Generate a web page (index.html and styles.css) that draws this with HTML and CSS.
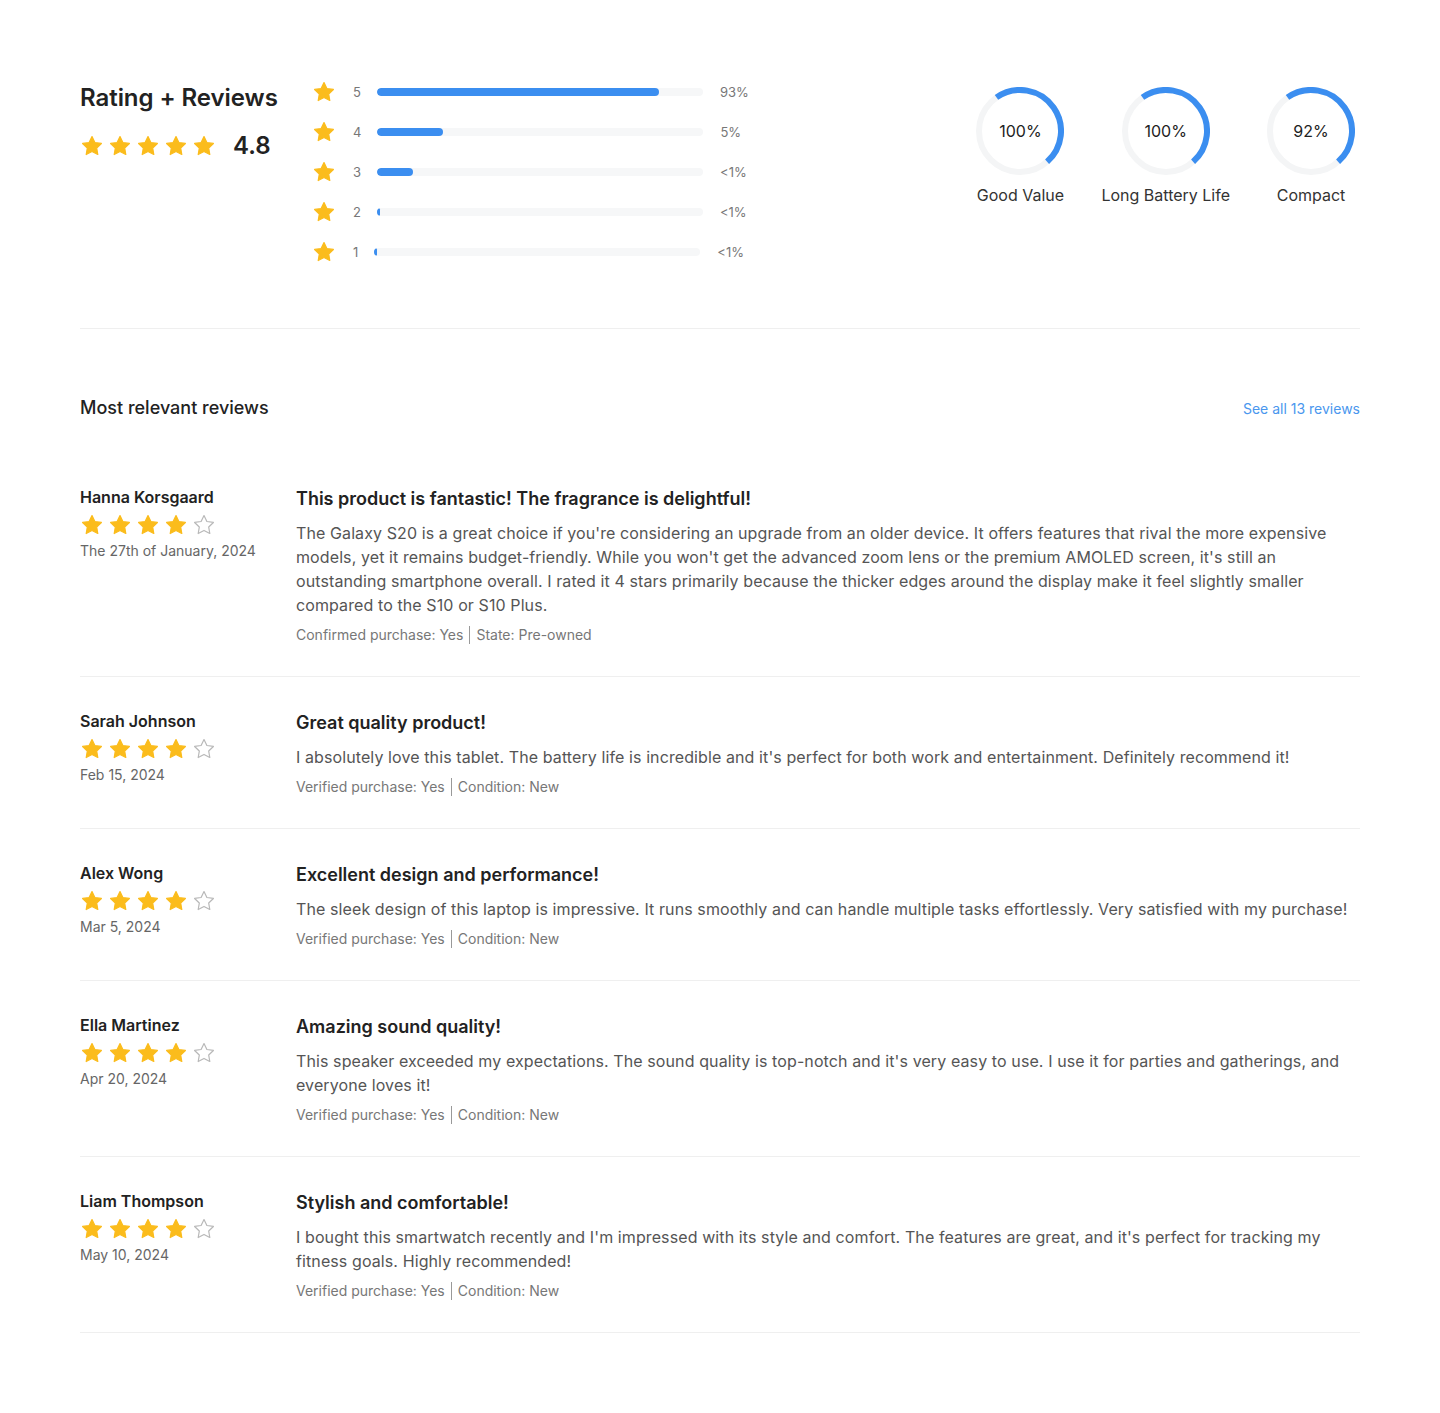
FILE: index.html
```html
<!DOCTYPE html>
<html lang="en">
<head>
<meta charset="utf-8">
<title>Rating + Reviews</title>
<link rel="stylesheet" href="styles.css">
</head>
<body>
<svg width="0" height="0" class="defs" aria-hidden="true">
  <defs>
    <path id="star" d="M12 2.6l2.9 5.9 6.5.95-4.7 4.6 1.1 6.45L12 17.45l-5.8 3.05 1.1-6.45-4.7-4.6 6.5-.95z"/>
  </defs>
</svg>
<main class="page">
  <section class="summary">
    <div class="overall">
      <h1 class="overall-title">Rating + Reviews</h1>
      <div class="overall-score">
        <div class="stars">
          <svg viewBox="0 0 24 24" class="star full"><use href="#star"/></svg>
          <svg viewBox="0 0 24 24" class="star full"><use href="#star"/></svg>
          <svg viewBox="0 0 24 24" class="star full"><use href="#star"/></svg>
          <svg viewBox="0 0 24 24" class="star full"><use href="#star"/></svg>
          <svg viewBox="0 0 24 24" class="star full"><use href="#star"/></svg>
        </div>
        <span class="score">4.8</span>
      </div>
    </div>

    <div class="bars">
      <div class="bar-row">
        <svg viewBox="0 0 24 24" class="star full"><use href="#star"/></svg>
        <span class="bar-num">5</span>
        <div class="track"><div class="fill" style="width:86.5%"></div></div>
        <span class="bar-pct">93%</span>
      </div>
      <div class="bar-row">
        <svg viewBox="0 0 24 24" class="star full"><use href="#star"/></svg>
        <span class="bar-num">4</span>
        <div class="track"><div class="fill" style="width:20.2%"></div></div>
        <span class="bar-pct">5%</span>
      </div>
      <div class="bar-row">
        <svg viewBox="0 0 24 24" class="star full"><use href="#star"/></svg>
        <span class="bar-num">3</span>
        <div class="track"><div class="fill" style="width:11%"></div></div>
        <span class="bar-pct">&lt;1%</span>
      </div>
      <div class="bar-row">
        <svg viewBox="0 0 24 24" class="star full"><use href="#star"/></svg>
        <span class="bar-num">2</span>
        <div class="track"><div class="fill" style="width:0.8%"></div></div>
        <span class="bar-pct">&lt;1%</span>
      </div>
      <div class="bar-row">
        <svg viewBox="0 0 24 24" class="star full"><use href="#star"/></svg>
        <span class="bar-num">1</span>
        <div class="track"><div class="fill" style="width:0.8%"></div></div>
        <span class="bar-pct">&lt;1%</span>
      </div>
    </div>

    <div class="rings">
      <div class="ring-item">
        <div class="ring">
          <svg viewBox="0 0 88 88" class="ring-svg">
            <circle cx="44" cy="44" r="41" class="ring-track"/>
            <circle cx="44" cy="44" r="41" class="ring-arc"/>
          </svg>
          <span class="ring-val">100%</span>
        </div>
        <div class="ring-label">Good Value</div>
      </div>
      <div class="ring-item">
        <div class="ring">
          <svg viewBox="0 0 88 88" class="ring-svg">
            <circle cx="44" cy="44" r="41" class="ring-track"/>
            <circle cx="44" cy="44" r="41" class="ring-arc"/>
          </svg>
          <span class="ring-val">100%</span>
        </div>
        <div class="ring-label">Long Battery Life</div>
      </div>
      <div class="ring-item">
        <div class="ring">
          <svg viewBox="0 0 88 88" class="ring-svg">
            <circle cx="44" cy="44" r="41" class="ring-track"/>
            <circle cx="44" cy="44" r="41" class="ring-arc"/>
          </svg>
          <span class="ring-val">92%</span>
        </div>
        <div class="ring-label">Compact</div>
      </div>
    </div>
  </section>

  <section class="reviews">
    <div class="reviews-head">
      <h2 class="reviews-title">Most relevant reviews</h2>
      <a class="see-all" href="#">See all 13 reviews</a>
    </div>

    <article class="review">
      <div class="review-author">
        <div class="author-name">Hanna Korsgaard</div>
        <div class="stars stars-sm">
          <svg viewBox="0 0 24 24" class="star full"><use href="#star"/></svg>
          <svg viewBox="0 0 24 24" class="star full"><use href="#star"/></svg>
          <svg viewBox="0 0 24 24" class="star full"><use href="#star"/></svg>
          <svg viewBox="0 0 24 24" class="star full"><use href="#star"/></svg>
          <svg viewBox="0 0 24 24" class="star empty"><use href="#star"/></svg>
        </div>
        <div class="author-date">The 27th of January, 2024</div>
      </div>
      <div class="review-body">
        <h3 class="review-title">This product is fantastic! The fragrance is delightful!</h3>
        <p class="review-text">The Galaxy S20 is a great choice if you're considering an upgrade from an older device. It offers features that rival the more expensive models, yet it remains budget-friendly. While you won't get the advanced zoom lens or the premium AMOLED screen, it's still an outstanding smartphone overall. I rated it 4 stars primarily because the thicker edges around the display make it feel slightly smaller compared to the S10 or S10 Plus.</p>
        <div class="review-meta">Confirmed purchase: Yes<span class="sep"></span>State: Pre-owned</div>
      </div>
    </article>

    <article class="review">
      <div class="review-author">
        <div class="author-name">Sarah Johnson</div>
        <div class="stars stars-sm">
          <svg viewBox="0 0 24 24" class="star full"><use href="#star"/></svg>
          <svg viewBox="0 0 24 24" class="star full"><use href="#star"/></svg>
          <svg viewBox="0 0 24 24" class="star full"><use href="#star"/></svg>
          <svg viewBox="0 0 24 24" class="star full"><use href="#star"/></svg>
          <svg viewBox="0 0 24 24" class="star empty"><use href="#star"/></svg>
        </div>
        <div class="author-date">Feb 15, 2024</div>
      </div>
      <div class="review-body">
        <h3 class="review-title">Great quality product!</h3>
        <p class="review-text">I absolutely love this tablet. The battery life is incredible and it's perfect for both work and entertainment. Definitely recommend it!</p>
        <div class="review-meta">Verified purchase: Yes<span class="sep"></span>Condition: New</div>
      </div>
    </article>

    <article class="review">
      <div class="review-author">
        <div class="author-name">Alex Wong</div>
        <div class="stars stars-sm">
          <svg viewBox="0 0 24 24" class="star full"><use href="#star"/></svg>
          <svg viewBox="0 0 24 24" class="star full"><use href="#star"/></svg>
          <svg viewBox="0 0 24 24" class="star full"><use href="#star"/></svg>
          <svg viewBox="0 0 24 24" class="star full"><use href="#star"/></svg>
          <svg viewBox="0 0 24 24" class="star empty"><use href="#star"/></svg>
        </div>
        <div class="author-date">Mar 5, 2024</div>
      </div>
      <div class="review-body">
        <h3 class="review-title">Excellent design and performance!</h3>
        <p class="review-text">The sleek design of this laptop is impressive. It runs smoothly and can handle multiple tasks effortlessly. Very satisfied with my purchase!</p>
        <div class="review-meta">Verified purchase: Yes<span class="sep"></span>Condition: New</div>
      </div>
    </article>

    <article class="review">
      <div class="review-author">
        <div class="author-name">Ella Martinez</div>
        <div class="stars stars-sm">
          <svg viewBox="0 0 24 24" class="star full"><use href="#star"/></svg>
          <svg viewBox="0 0 24 24" class="star full"><use href="#star"/></svg>
          <svg viewBox="0 0 24 24" class="star full"><use href="#star"/></svg>
          <svg viewBox="0 0 24 24" class="star full"><use href="#star"/></svg>
          <svg viewBox="0 0 24 24" class="star empty"><use href="#star"/></svg>
        </div>
        <div class="author-date">Apr 20, 2024</div>
      </div>
      <div class="review-body">
        <h3 class="review-title">Amazing sound quality!</h3>
        <p class="review-text">This speaker exceeded my expectations. The sound quality is top-notch and it's very easy to use. I use it for parties and gatherings, and everyone loves it!</p>
        <div class="review-meta">Verified purchase: Yes<span class="sep"></span>Condition: New</div>
      </div>
    </article>

    <article class="review">
      <div class="review-author">
        <div class="author-name">Liam Thompson</div>
        <div class="stars stars-sm">
          <svg viewBox="0 0 24 24" class="star full"><use href="#star"/></svg>
          <svg viewBox="0 0 24 24" class="star full"><use href="#star"/></svg>
          <svg viewBox="0 0 24 24" class="star full"><use href="#star"/></svg>
          <svg viewBox="0 0 24 24" class="star full"><use href="#star"/></svg>
          <svg viewBox="0 0 24 24" class="star empty"><use href="#star"/></svg>
        </div>
        <div class="author-date">May 10, 2024</div>
      </div>
      <div class="review-body">
        <h3 class="review-title">Stylish and comfortable!</h3>
        <p class="review-text">I bought this smartwatch recently and I'm impressed with its style and comfort. The features are great, and it's perfect for tracking my fitness goals. Highly recommended!</p>
        <div class="review-meta">Verified purchase: Yes<span class="sep"></span>Condition: New</div>
      </div>
    </article>
  </section>
</main>
</body>
</html>
```

FILE: styles.css
```css
* { box-sizing: border-box; }

html, body {
  margin: 0;
  padding: 0;
  background: #ffffff;
}

body {
  font-family: Inter, "Noto Sans", "Liberation Sans", sans-serif;
  color: #222;
}

.defs {
  position: absolute;
  width: 0;
  height: 0;
  overflow: hidden;
}

.page {
  padding: 0 80px 80px;
}

/* ---------- stars ---------- */
.star {
  width: 24px;
  height: 24px;
  display: block;
  flex: none;
}
.star.full {
  fill: #fbbc1c;
  stroke: #fbbc1c;
  stroke-width: 1.2;
  stroke-linejoin: round;
}
.star.empty {
  fill: none;
  stroke: #b8b8b8;
  stroke-width: 1.2;
  stroke-linejoin: round;
}

.stars {
  display: flex;
  align-items: center;
  gap: 4px;
}

/* ---------- summary ---------- */
.summary {
  display: flex;
  align-items: flex-start;
  padding: 80px 0 64px;
  border-bottom: 1px solid #efefef;
}

.overall {
  width: 232px;
  flex: none;
  padding-top: 1px;
}

.overall-title {
  margin: 0;
  font-size: 24px;
  line-height: 34px;
  font-weight: 600;
  color: #222;
  letter-spacing: -0.05px;
}

.overall-score {
  display: flex;
  align-items: center;
  margin-top: 15px;
  height: 32px;
}

.score {
  margin-left: 17px;
  font-size: 24px;
  line-height: 32px;
  font-weight: 600;
  color: #222;
}

.bars {
  display: flex;
  flex-direction: column;
  gap: 16px;
}

.bar-row {
  display: flex;
  align-items: center;
  height: 24px;
}

.bar-num {
  margin-left: 17px;
  font-size: 13px;
  color: #777;
  line-height: 24px;
}

.track {
  margin-left: 16px;
  width: 326px;
  height: 8px;
  border-radius: 4px;
  background: #f6f7f8;
  overflow: hidden;
}

.fill {
  height: 100%;
  min-width: 2px;
  border-radius: 4px;
  background: #3b8ef0;
}

.bar-pct {
  margin-left: 17px;
  font-size: 13px;
  line-height: 24px;
  color: #777;
}

.rings {
  margin-left: auto;
  margin-right: 5px;
  padding-top: 7px;
  display: flex;
  gap: 37px;
}

.ring-item {
  display: flex;
  flex-direction: column;
  align-items: center;
}

.ring {
  position: relative;
  width: 88px;
  height: 88px;
}

.ring-svg {
  width: 88px;
  height: 88px;
  display: block;
}

.ring-track {
  fill: none;
  stroke: #f4f5f6;
  stroke-width: 6;
}

.ring-arc {
  fill: none;
  stroke: #3b8ef0;
  stroke-width: 6;
  stroke-dasharray: 124 400;
  transform: rotate(-125deg);
  transform-origin: 44px 44px;
}

.ring-val {
  position: absolute;
  inset: 0;
  display: flex;
  align-items: center;
  justify-content: center;
  font-size: 16px;
  color: #222;
}

.ring-label {
  margin-top: 10px;
  font-size: 16px;
  line-height: 20px;
  color: #333;
  white-space: nowrap;
}

/* ---------- reviews ---------- */
.reviews-head {
  display: flex;
  align-items: center;
  justify-content: space-between;
  padding: 65px 0 31px;
}

.reviews-title {
  margin: 0;
  font-size: 18px;
  line-height: 28px;
  font-weight: 500;
  color: #222;
}

.see-all {
  font-size: 14px;
  color: #4a97ee;
  text-decoration: none;
}

.review {
  display: flex;
  padding: 32px 0 31px;
  border-bottom: 1px solid #efefef;
}

.review-author {
  width: 216px;
  flex: none;
}

.author-name {
  font-size: 16px;
  line-height: 24px;
  font-weight: 600;
  color: #222;
}

.stars-sm {
  margin-top: 4px;
}

.author-date {
  margin-top: 4px;
  font-size: 14px;
  line-height: 20px;
  color: #666;
}

.review-body {
  flex: 1;
  min-width: 0;
}

.review-title {
  margin: 0;
  font-size: 18px;
  line-height: 28px;
  font-weight: 600;
  color: #222;
}

.review-text {
  margin: 8px 0 0;
  font-size: 16px;
  line-height: 24px;
  color: #555;
  letter-spacing: 0.1px;
}

.review-meta {
  margin-top: 8px;
  font-size: 14px;
  line-height: 20px;
  color: #777;
  display: flex;
  align-items: center;
}

.sep {
  display: inline-block;
  width: 1px;
  height: 18px;
  background: #999;
  margin: 0 6px;
}
```
